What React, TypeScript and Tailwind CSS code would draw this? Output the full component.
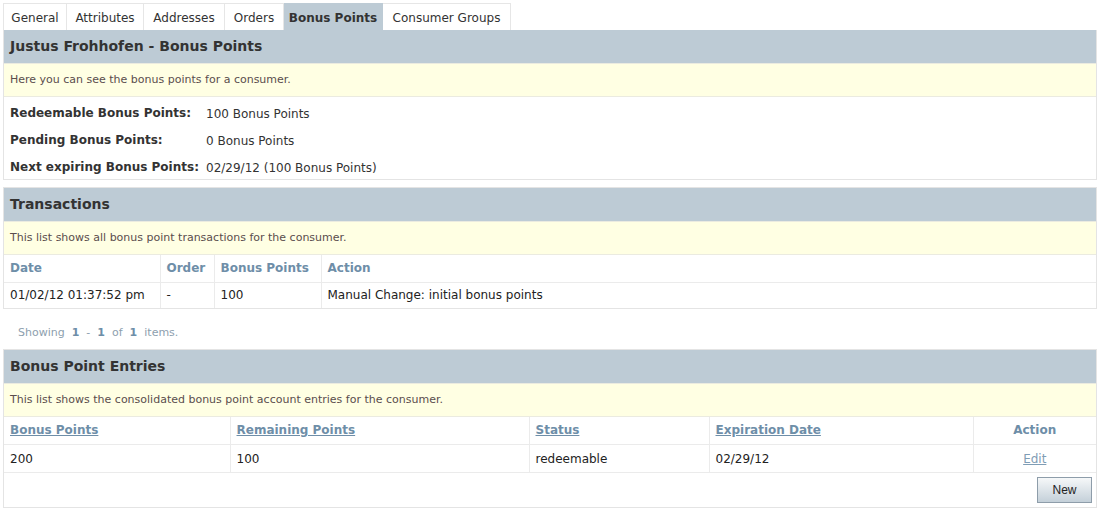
import React from 'react'

const tabs: [string, string][] = [
  ['General', 'w-[64px]'],
  ['Attributes', 'w-[77px]'],
  ['Addresses', 'w-[81px]'],
  ['Orders', 'w-[59px]'],
  ['Bonus Points', 'w-[99px]'],
  ['Consumer Groups', 'w-[128px]'],
]

function SectionHeader({ title }: { title: string }) {
  return (
    <div className="flex h-[33px] items-center bg-[#bdcbd5] px-[6px] text-[14px] font-bold text-[#333]">
      {title}
    </div>
  )
}

function Hint({ text }: { text: string }) {
  return (
    <div className="flex h-[34px] items-center border-y border-[#ebebe0] bg-[#ffffe3] px-[6px] text-[11px] text-[#5a4d4d]">
      {text}
    </div>
  )
}

export default function App() {
  return (
    <div className="bg-white px-[3px] pt-[3px] text-[12px] text-[#222] font-['DejaVu_Sans',Verdana,sans-serif]">
      <div className="flex h-[27px]">
        {tabs.map(([t, w]) => {
          const active = t === 'Bonus Points'
          return (
            <div
              key={t}
              className={
                active
                  ? `${w} flex items-center justify-center border border-b-0 border-l-0 border-[#bdcbd5] bg-[#bdcbd5] pt-[1px] font-bold text-[#333]`
                  : `${w} flex items-center justify-center border border-b-0 border-l-0 border-[#e6e6e6] pt-[1px] text-[#333] first:border-l`
              }
            >
              {t}
            </div>
          )
        })}
      </div>

      <div className="border border-t-0 border-[#e4e4e4]">
        <SectionHeader title="Justus Frohhofen - Bonus Points" />
        <Hint text="Here you can see the bonus points for a consumer." />
        <div className="px-[6px] pt-[1px]">
          {[
            ['Redeemable Bonus Points:', '100 Bonus Points'],
            ['Pending Bonus Points:', '0 Bonus Points'],
            ['Next expiring Bonus Points:', '02/29/12 (100 Bonus Points)'],
          ].map(([k, v]) => (
            <div key={k} className="flex h-[27px] items-center pt-[2px]">
              <div className="w-[196px] font-bold text-[#333]">{k}</div>
              <div className="pt-[2px] text-[#333]">{v}</div>
            </div>
          ))}
        </div>
      </div>

      <div className="mt-[7px] border border-[#e4e4e4]">
        <SectionHeader title="Transactions" />
        <Hint text="This list shows all bonus point transactions for the consumer." />
        <table className="w-full border-collapse text-left">
          <thead>
            <tr className="h-[27px] border-b border-[#ebebeb] text-[#6e8ea8]">
              <th className="w-[156px] border-r border-[#ebebeb] px-[6px] font-bold">Date</th>
              <th className="w-[54px] border-r border-[#ebebeb] px-[6px] font-bold">Order</th>
              <th className="w-[107px] border-r border-[#ebebeb] px-[6px] font-bold">Bonus Points</th>
              <th className="px-[6px] font-bold">Action</th>
            </tr>
          </thead>
          <tbody>
            <tr className="h-[26px] text-[#222]">
              <td className="border-r border-[#ebebeb] px-[6px]">01/02/12 01:37:52 pm</td>
              <td className="border-r border-[#ebebeb] px-[6px]">-</td>
              <td className="border-r border-[#ebebeb] px-[6px]">100</td>
              <td className="px-[6px]">Manual Change: initial bonus points</td>
            </tr>
          </tbody>
        </table>
      </div>

      <div className="flex h-[40px] items-center px-[15px] pt-[8px] text-[11px] text-[#8da0ae]">
        <span>Showing</span>
        <span className="mx-[7px] font-bold text-[#6e8ea8]">1</span>
        <span>-</span>
        <span className="mx-[7px] font-bold text-[#6e8ea8]">1</span>
        <span>of</span>
        <span className="mx-[7px] font-bold text-[#6e8ea8]">1</span>
        <span>items.</span>
      </div>

      <div className="border border-[#e4e4e4]">
        <SectionHeader title="Bonus Point Entries" />
        <Hint text="This list shows the consolidated bonus point account entries for the consumer." />
        <table className="w-full border-collapse text-left">
          <thead>
            <tr className="h-[27px] border-b border-[#ebebeb] text-[#6e8ea8]">
              <th className="w-[226px] border-r border-[#ebebeb] px-[6px] font-bold underline">Bonus Points</th>
              <th className="w-[299px] border-r border-[#ebebeb] px-[6px] font-bold underline">Remaining Points</th>
              <th className="w-[180px] border-r border-[#ebebeb] px-[6px] font-bold underline">Status</th>
              <th className="w-[264px] border-r border-[#ebebeb] px-[6px] font-bold underline">Expiration Date</th>
              <th className="px-[6px] text-center font-bold">Action</th>
            </tr>
          </thead>
          <tbody>
            <tr className="h-[28px] border-b border-[#ebebeb] text-[#222]">
              <td className="border-r border-[#ebebeb] px-[6px] pt-[2px]">200</td>
              <td className="border-r border-[#ebebeb] px-[6px] pt-[2px]">100</td>
              <td className="border-r border-[#ebebeb] px-[6px] pt-[2px]">redeemable</td>
              <td className="border-r border-[#ebebeb] px-[6px] pt-[2px]">02/29/12</td>
              <td className="px-[6px] pt-[2px] text-center">
                <a className="text-[#7f9db5] underline">Edit</a>
              </td>
            </tr>
          </tbody>
        </table>
        <div className="flex h-[34px] items-center justify-end pr-[4px]">
          <button className="h-[26px] w-[55px] border border-[#8e9daa] bg-gradient-to-b from-[#f6f8f9] to-[#c4d0d9] text-[12px] text-[#222] font-['Liberation_Sans',Arial,sans-serif]">
            New
          </button>
        </div>
      </div>
    </div>
  )
}
